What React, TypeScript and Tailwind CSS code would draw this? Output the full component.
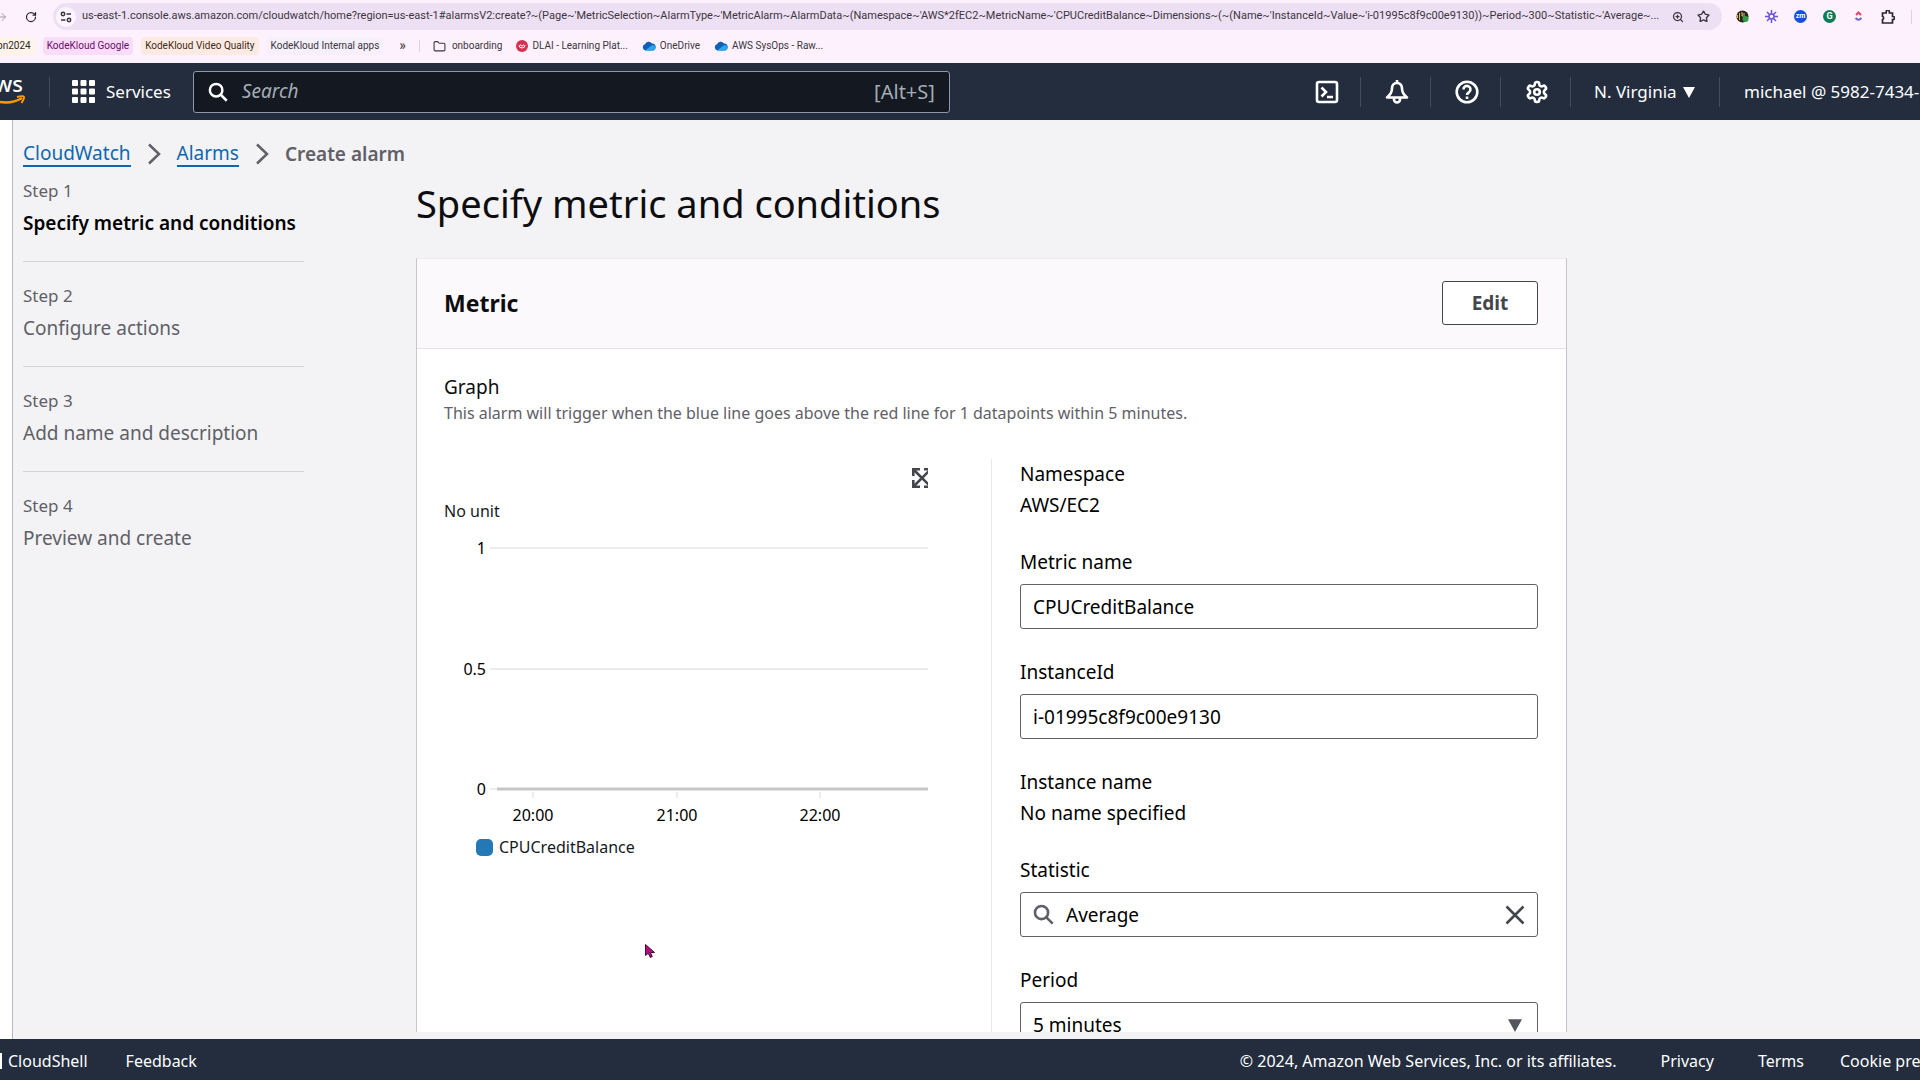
import { ReactNode } from "react";
import { ArrowRight, Folder, RotateCw, Star, ZoomIn } from "lucide-react";

const url =
  "us-east-1.console.aws.amazon.com/cloudwatch/home?region=us-east-1#alarmsV2:create?~(Page~'MetricSelection~AlarmType~'MetricAlarm~AlarmData~(Namespace~'AWS*2fEC2~MetricName~'CPUCreditBalance~Dimensions~(~(Name~'InstanceId~Value~'i-01995c8f9c00e9130))~Period~300~Statistic~'Average~...";

const steps = [
  "Specify metric and conditions",
  "Configure actions",
  "Add name and description",
  "Preview and create",
];

const SearchIcon = ({ className }: { className?: string }) => (
  <svg
    viewBox="0 0 16 16"
    fill="none"
    stroke="currentColor"
    strokeWidth="2"
    className={className}
  >
    <circle cx="6.5" cy="6.5" r="5" />
    <path d="m10 10 5 5" />
  </svg>
);

const Caret = ({ className }: { className?: string }) => (
  <svg viewBox="0 0 12 12" fill="currentColor" className={className}>
    <path d="M0 1h12L6 12z" />
  </svg>
);

const Cloud = () => (
  <svg viewBox="0 0 14 10" className="h-[10px] w-[14px] shrink-0">
    <path
      d="M3.5 9.5A3.2 3.2 0 0 1 3 3.3A4 4 0 0 1 10 2.6A3.5 3.5 0 0 1 11 9.5z"
      fill="#0f5fb4"
    />
    <path
      d="M3 9.5 9.5 4.5A2.7 2.7 0 0 1 13.5 7.2A2.3 2.3 0 0 1 11.5 9.5z"
      fill="#28a8ea"
    />
  </svg>
);

const BrowserBar = () => (
  <div className="h-[63px] shrink-0 overflow-hidden bg-[#fdf1fd] font-[Roboto,'Noto_Sans',sans-serif] text-[#3c3540]">
    <div className="flex h-[33px] items-center pr-2">
      <button aria-label="Forward" className="-ml-1 text-[#a59aa8]">
        <ArrowRight className="h-3 w-3" />
      </button>
      <button aria-label="Reload" className="ml-[17px] text-[#2c2630]">
        <RotateCw className="h-3 w-3" strokeWidth={2.5} />
      </button>
      <div className="ml-4 flex h-[27px] min-w-0 flex-1 items-center rounded-full bg-[#ede0f4] pr-3">
        <span className="ml-[3px] flex h-5 w-5 shrink-0 items-center justify-center rounded-full bg-[#fdf5fe]">
          <svg
            viewBox="0 0 12 12"
            fill="none"
            stroke="currentColor"
            strokeWidth="1.5"
            className="h-3 w-3"
          >
            <circle cx="3" cy="3" r="1.7" />
            <path d="M6.5 3H11M1 9h4.500" />
            <circle cx="9" cy="9" r="1.7" />
          </svg>
        </span>
        <input
          aria-label="Address"
          readOnly
          value={url}
          className="ml-[6px] min-w-0 flex-1 truncate bg-transparent text-[11px] outline-none"
        />
        <ZoomIn className="ml-3 h-3 w-3 shrink-0" strokeWidth={2.5} />
        <Star className="ml-[13px] h-[13px] w-[13px] shrink-0" strokeWidth={2.5} />
      </div>
      <div className="ml-[14px] flex items-center gap-4">
        <svg viewBox="0 0 13 13" className="h-[13px] w-[13px]">
          <circle cx="6.5" cy="6.5" r="6" fill="#26241c" />
          <path
            d="M3.5 3v7M6 2v4h3M6 4h3M1.500 5v3"
            stroke="#d8bf4a"
            fill="none"
          />
          <circle cx="9.5" cy="9" r="3" fill="#2f9e44" />
        </svg>
        <svg
          viewBox="0 0 13 13"
          fill="none"
          stroke="#6a55d8"
          strokeWidth="1.5"
          className="h-[13px] w-[13px]"
        >
          <circle cx="6.5" cy="6.5" r="2.5" />
          <path d="M6.5 0v4M6.5 9v4M0 6.5h4M9 6.5h4M2 2l2.500 2.500M8.500 8.500 11 11M11 2 8.500 4.500M2 11l2.500-2.500" />
        </svg>
        <span className="flex h-[13px] w-[13px] items-center justify-center rounded-full bg-[#1450e0] text-[7px] leading-none font-bold text-white">
          zm
        </span>
        <span className="flex h-[13px] w-[13px] items-center justify-center rounded-full bg-[#0f7a58] text-[9px] leading-none font-bold text-white">
          G
        </span>
        <svg
          viewBox="0 0 13 13"
          fill="none"
          strokeWidth="2"
          className="h-[13px] w-[13px]"
        >
          <path d="m4 5 2.500-2.500L9 5" stroke="#ee3f6c" />
          <path d="M3.500 8q3 3.500 6 0" stroke="#7566c8" />
        </svg>
        <svg
          viewBox="0 0 14 14"
          fill="none"
          stroke="#2c2630"
          strokeWidth="1.7"
          className="h-[14px] w-[14px]"
        >
          <path d="M1.500 3h3.700V1.800a1.600 1.600 0 0 1 3.200 0V3H11.500v3.500h.5a1.500 1.500 0 0 1 0 3h-.5V13h-10V9.500a1.700 1.700 0 0 0 0-3.200z" />
        </svg>
        <span className="h-[14px] w-px bg-[#e3cdea]" />
      </div>
    </div>
    <div className="flex h-[26px] items-center text-[10px] leading-4 whitespace-nowrap">
      <a
        href="#"
        className="-ml-[3px] rounded bg-[#fff4e6] py-px pr-1 text-[#2c2630]"
      >
        on2024
      </a>
      <a
        href="#"
        className="ml-2 rounded bg-[#f9dcf8] px-1 py-px text-[#6d0b69]"
      >
        KodeKloud Google
      </a>
      <a
        href="#"
        className="ml-2 rounded bg-[#fdeae2] px-1 py-px text-[#3d2a20]"
      >
        KodeKloud Video Quality
      </a>
      <a href="#" className="ml-2 rounded bg-[#f5f0fb] px-1 py-px">
        KodeKloud Internal apps
      </a>
      <button
        aria-label="More bookmarks"
        className="ml-4 pb-0.5 text-sm leading-none"
      >
        »
      </button>
      <span className="mx-[13px] h-3 w-px bg-[#dfcfe3]" />
      <a href="#" className="flex items-center gap-[6px]">
        <Folder className="h-[13px] w-[13px]" />
        onboarding
      </a>
      <a href="#" className="ml-[14px] flex items-center gap-1">
        <svg viewBox="0 0 12 12" fill="none" className="h-3 w-3">
          <circle cx="6" cy="6" r="6" fill="#d9304f" />
          <path
            d="M3 5a3 3 0 0 0 6 0M4.500 4.500a1.500 1.500 0 0 0 3 0"
            stroke="#fff"
          />
        </svg>
        DLAI - Learning Plat...
      </a>
      <a href="#" className="ml-[14px] flex items-center gap-1">
        <Cloud />
        OneDrive
      </a>
      <a href="#" className="ml-[14px] flex items-center gap-1">
        <Cloud />
        AWS SysOps - Raw...
      </a>
    </div>
  </div>
);

const NavIcon = ({
  label,
  children,
}: {
  label: string;
  children: ReactNode;
}) => (
  <button
    aria-label={label}
    className="flex h-[30px] w-[70px] items-center justify-center border-r border-[#414d5c] pl-0.5"
  >
    <svg
      viewBox="0 0 24 24"
      fill="none"
      stroke="currentColor"
      strokeWidth="2.6"
      className="h-6 w-6"
    >
      {children}
    </svg>
  </button>
);

const TopNav = () => (
  <header className="flex h-[57px] shrink-0 items-center overflow-hidden bg-[#232d3e] text-[17px] text-white">
    <a href="#" aria-label="AWS home" className="shrink-0">
      <svg viewBox="0 0 25 32" className="h-8 w-[25px]">
        <text
          x="23"
          y="16"
          textAnchor="end"
          fill="#fff"
          fontSize="22"
          fontWeight="500"
        >
          ws
        </text>
        <path
          d="M0 26q12 2 22-4"
          stroke="#ff9900"
          strokeWidth="2.5"
          fill="none"
        />
        <path
          d="M17 21q6.500-1.500 7 0t-2.500 6"
          stroke="#ff9900"
          strokeWidth="2"
          fill="none"
        />
      </svg>
    </a>
    <button className="ml-6 flex h-[30px] items-center gap-[11px] border-l border-[#414d5c] pl-[22px]">
      <svg viewBox="0 0 23 23" fill="currentColor" className="h-[23px] w-[23px]">
        {[0, 8.5, 17].map((y) =>
          [0, 8.5, 17].map((x) => (
            <rect key={`${x}-${y}`} x={x} y={y} width="6" height="6" rx="1" />
          ))
        )}
      </svg>
      Services
    </button>
    <div className="ml-[22px] flex h-[42px] w-[757px] items-center rounded-[3px] border border-[#8d99a8] bg-[#141820] px-[14px]">
      <SearchIcon className="h-5 w-5 shrink-0" />
      <input
        type="search"
        aria-label="Search"
        placeholder="Search"
        className="ml-[14px] min-w-0 flex-1 bg-transparent text-[19px] italic outline-none placeholder:text-[#a3adb8]"
      />
      <span className="text-xl text-[#a3adb8]">[Alt+S]</span>
    </div>
    <div className="ml-auto flex shrink-0 items-center">
      <NavIcon label="CloudShell">
        <rect x="2" y="2" width="20" height="20" rx="2" />
        <path d="m6.500 7.500 4.500 4.500-4.500 4.500M12 17h6" />
      </NavIcon>
      <NavIcon label="Notifications">
        <path
          d="M12 3c-3.300 0-5 2.500-5 5.500C7 13 5 15 2 17.500h20c-3-2.500-5-4.500-5-9C17 5.500 15.300 3 12 3z"
          strokeLinejoin="round"
        />
        <path d="M12 0v3M9 18v1.500a3 3 0 0 0 6 0V18" />
      </NavIcon>
      <NavIcon label="Help">
        <circle cx="12" cy="12" r="10.3" />
        <path d="M8.500 9.500a3.500 3.500 0 1 1 5.500 2.800c-1.300.9-2 1.200-2 2.700M12 16.500v2.500" />
      </NavIcon>
      <NavIcon label="Settings">
        <path
          d="M12.220 2h-.44a2 2 0 0 0-2 2v.180a2 2 0 0 1-1 1.730l-.43.250a2 2 0 0 1-2 0l-.15-.08a2 2 0 0 0-2.730.730l-.22.380a2 2 0 0 0 .730 2.730l.150.100a2 2 0 0 1 1 1.720v.510a2 2 0 0 1-1 1.740l-.15.090a2 2 0 0 0-.73 2.730l.220.380a2 2 0 0 0 2.730.730l.150-.08a2 2 0 0 1 2 0l.430.250a2 2 0 0 1 1 1.730V20a2 2 0 0 0 2 2h.440a2 2 0 0 0 2-2v-.18a2 2 0 0 1 1-1.730l.430-.25a2 2 0 0 1 2 0l.150.080a2 2 0 0 0 2.730-.73l.220-.39a2 2 0 0 0-.73-2.730l-.15-.08a2 2 0 0 1-1-1.740v-.5a2 2 0 0 1 1-1.740l.150-.09a2 2 0 0 0 .730-2.730l-.22-.38a2 2 0 0 0-2.730-.73l-.15.080a2 2 0 0 1-2 0l-.43-.25a2 2 0 0 1-1-1.730V4a2 2 0 0 0-2-2z"
          strokeLinejoin="round"
        />
        <circle cx="12" cy="12" r="2.8" />
      </NavIcon>
      <button className="flex h-[30px] w-[149px] items-center gap-[6px] border-r border-[#414d5c] pl-[23px] whitespace-nowrap">
        N. Virginia
        <Caret className="h-3 w-3" />
      </button>
      <button className="w-[200px] overflow-hidden pl-6 text-left whitespace-nowrap">
        michael @ 5982-7434-
      </button>
    </div>
  </header>
);

const Chevron = () => (
  <svg
    viewBox="0 0 14 22"
    fill="none"
    stroke="#5f6068"
    strokeWidth="2.5"
    className="mx-4 h-[22px] w-[14px]"
  >
    <path d="m2 1.500 10 9.500L2 20.500" />
  </svg>
);

const Breadcrumbs = () => (
  <nav aria-label="Breadcrumbs" className="flex items-center leading-7">
    <a
      href="#"
      className="border-b-2 border-[#0f67b0] leading-6 text-[#0f67b0]"
    >
      CloudWatch
    </a>
    <Chevron />
    <a
      href="#"
      className="border-b-2 border-[#0f67b0] leading-6 text-[#0f67b0]"
    >
      Alarms
    </a>
    <Chevron />
    <span className="font-semibold text-[#5f6068]">Create alarm</span>
  </nav>
);

const Steps = () => (
  <ol className="w-[281px] shrink-0 text-[#5f6068]">
    {steps.map((step, index) => (
      <li
        key={step}
        className={
          index === steps.length - 1
            ? ""
            : "mb-[22px] border-b border-[#d5d5d9] pb-6"
        }
      >
        <p className="text-[17px] leading-6">Step {index + 1}</p>
        <p
          className={`mt-[6px] leading-7 whitespace-nowrap ${
            index === 0 ? "font-semibold text-black" : ""
          }`}
        >
          {step}
        </p>
      </li>
    ))}
  </ol>
);

// 484 x 400 plot area, an empty series between 0 and 1
const MetricChart = () => (
  <svg viewBox="0 0 484 400" className="h-[400px] w-[484px]" fill="#16191f">
    <text x="0" y="58" fontSize="16">
      No unit
    </text>
    <g stroke="#ececee" strokeWidth="2">
      <path d="M46 89h438M46 210h438M46 330h10" />
      <path d="M89 333v6M233 333v6M376 333v6" />
    </g>
    <path d="M53 330h431" stroke="#c6c6c6" strokeWidth="3" />
    <g fontSize="16" textAnchor="end" fill="#000">
      <text x="42" y="95">
        1
      </text>
      <text x="42" y="216">
        0.5
      </text>
      <text x="42" y="336">
        0
      </text>
    </g>
    <g fontSize="16" textAnchor="middle" fill="#000">
      <text x="89" y="362">
        20:00
      </text>
      <text x="233" y="362">
        21:00
      </text>
      <text x="376" y="362">
        22:00
      </text>
    </g>
    <rect x="32" y="380" width="17" height="17" rx="5" fill="#2478b5" />
    <text x="55" y="394" fontSize="16">
      CPUCreditBalance
    </text>
    <g transform="translate(468 9)" stroke="#44464d" fill="none">
      <path
        d="M1.300 8V1.300H8M12 1.300h6.700V8M18.700 12v6.700H12M8 18.700H1.300V12"
        strokeWidth="2.6"
      />
      <path d="m2 2 16 16M18 2 2 18" strokeWidth="2.6" />
    </g>
  </svg>
);

const inputClass =
  "mt-2 block h-[45px] w-full rounded-[3px] border border-[#5f6068] bg-white px-3 text-black";

const MetricForm = () => (
  <div className="flex min-w-0 flex-1 flex-col gap-[29px] border-l border-[#e6e8ea] pt-px pl-7 leading-7 text-black">
    <div>
      <p>Namespace</p>
      <p className="mt-[3px]">AWS/EC2</p>
    </div>
    <div>
      <label htmlFor="metricName" className="block">
        Metric name
      </label>
      <input
        id="metricName"
        type="text"
        defaultValue="CPUCreditBalance"
        className={inputClass}
      />
    </div>
    <div>
      <label htmlFor="instanceId" className="block">
        InstanceId
      </label>
      <input
        id="instanceId"
        type="text"
        defaultValue="i-01995c8f9c00e9130"
        className={inputClass}
      />
    </div>
    <div>
      <p>Instance name</p>
      <p className="mt-[3px]">No name specified</p>
    </div>
    <div>
      <label htmlFor="statistic" className="block">
        Statistic
      </label>
      <div className="mt-2 flex h-[45px] items-center rounded-[3px] border border-[#5f6068] px-3">
        <SearchIcon className="h-[21px] w-[21px] shrink-0 text-[#5f6068]" />
        <input
          id="statistic"
          type="text"
          defaultValue="Average"
          className="ml-3 min-w-0 flex-1 outline-none"
        />
        <button aria-label="Clear statistic" className="text-[#44464d]">
          <svg
            viewBox="0 0 20 20"
            fill="none"
            stroke="currentColor"
            strokeWidth="2.5"
            className="h-5 w-5"
          >
            <path d="m1.500 1.500 17 17M18.500 1.500l-17 17" />
          </svg>
        </button>
      </div>
    </div>
    <div>
      <label htmlFor="period" className="block">
        Period
      </label>
      <div className="relative">
        <select id="period" className={`${inputClass} appearance-none`}>
          <option>5 minutes</option>
        </select>
        <Caret className="pointer-events-none absolute top-4 right-4 h-[14px] w-[14px] text-[#54565d]" />
      </div>
    </div>
  </div>
);

const App = () => {
  return (
    <div className="flex h-screen flex-col overflow-hidden bg-[#f3f3f5] font-['Noto_Sans','Open_Sans',sans-serif] text-[19px] text-[#0d0d10]">
      <BrowserBar />
      <TopNav />
      <div className="flex min-h-0 flex-1">
        <div className="w-[13px] shrink-0 border-r border-[#b9babd] bg-white" />
        <main className="mb-[7px] min-w-0 flex-1 overflow-hidden pt-5 pl-[10px]">
          <Breadcrumbs />
          <div className="mt-[11px] flex items-start">
            <Steps />
            <div className="mr-10 ml-28 max-w-[1151px] flex-1">
              <h1 className="text-[38px] leading-[48px]">
                Specify metric and conditions
              </h1>
              <section className="mt-[31px] border border-[#c6c6cd] border-t-[#ebebf0] bg-white">
                <div className="flex items-center justify-between border-b border-[#e3e3e8] bg-[#fbf9fc] pt-[22px] pr-7 pb-[23px] pl-[27px]">
                  <h2 className="text-[23px] leading-8 font-bold">Metric</h2>
                  <button className="h-11 w-24 rounded-[3px] border border-[#44464d] bg-white font-bold text-[#44464d]">
                    Edit
                  </button>
                </div>
                <div className="pt-6 pr-7 pb-8 pl-[27px]">
                  <h3 className="leading-7">Graph</h3>
                  <p className="text-base leading-6 text-[#5f6068]">
                    This alarm will trigger when the blue line goes above the red
                    line for 1 datapoints within 5 minutes.
                  </p>
                  <div className="mt-[34px] flex">
                    <div className="w-[547px] shrink-0">
                      <MetricChart />
                    </div>
                    <MetricForm />
                  </div>
                </div>
              </section>
            </div>
          </div>
        </main>
      </div>
      <footer className="flex h-[41px] shrink-0 items-center overflow-hidden bg-[#232d3e] pt-0.5 text-base whitespace-nowrap text-white">
        <span className="h-4 w-0.5 bg-white" />
        <a href="#" className="ml-[6px]">
          CloudShell
        </a>
        <a href="#" className="ml-[38px]">
          Feedback
        </a>
        <span className="ml-auto">
          © 2024, Amazon Web Services, Inc. or its affiliates.
        </span>
        <a href="#" className="ml-11">
          Privacy
        </a>
        <a href="#" className="ml-11">
          Terms
        </a>
        <a href="#" className="ml-9 w-20 overflow-hidden">
          Cookie preferences
        </a>
      </footer>
      {/* mouse pointer */}
      <svg
        viewBox="0 0 10 14"
        className="pointer-events-none absolute top-[944px] left-[645px] h-[14px] w-[10px]"
      >
        <path
          d="M.5.5v11l2.800-2.300 2 4.300 2-1-1.900-4H9.500z"
          fill="#b0107f"
          stroke="#4a0838"
        />
      </svg>
    </div>
  );
};

export default App;
